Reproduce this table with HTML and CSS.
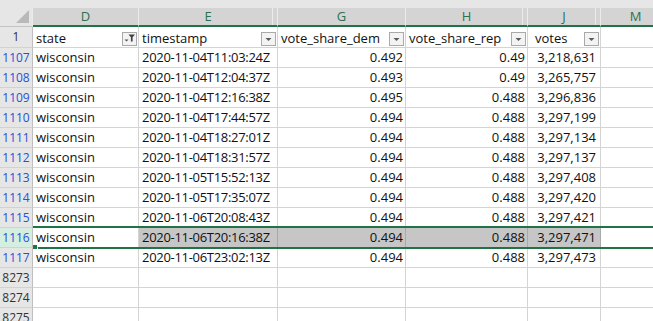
FILE: index.html
```html
<!DOCTYPE html>
<html>
<head>
<meta charset="utf-8">
<link rel="stylesheet" href="styles.css">
</head>
<body>
<div class="sheet">
  <div class="topbar"></div>
  <div class="row colhead">
    <div class="corner"><svg width="14" height="14" viewBox="0 0 14 14"><polygon points="13,0 13,13 0,13" fill="#b9b9b9"/></svg></div>
    <div class="ch">D</div>
    <div class="ch hid">E</div>
    <div class="ch">G</div>
    <div class="ch hid">H</div>
    <div class="ch hid">J</div>
    <div class="ch">M</div>
  </div>
  <div class="row first">
    <div class="rh">1</div>
    <div class="c hd"><span>state</span><span class="fbtn"><svg width="13" height="12" viewBox="0 0 13 12"><polygon points="1.5,6.5 5.5,6.5 3.5,8.5" fill="#505050"/><path d="M5.5 1.5 H12 L9.6 4.2 V8.5 H7.9 V4.2 Z" fill="#404040"/></svg></span></div>
    <div class="c hd"><span>timestamp</span><span class="fbtn"><svg width="13" height="12" viewBox="0 0 13 12"><polygon points="3.5,5 9.5,5 6.5,8" fill="#5a5a5a"/></svg></span></div>
    <div class="c hd"><span>vote_share_dem</span><span class="fbtn"><svg width="13" height="12" viewBox="0 0 13 12"><polygon points="3.5,5 9.5,5 6.5,8" fill="#5a5a5a"/></svg></span></div>
    <div class="c hd"><span>vote_share_rep</span><span class="fbtn"><svg width="13" height="12" viewBox="0 0 13 12"><polygon points="3.5,5 9.5,5 6.5,8" fill="#5a5a5a"/></svg></span></div>
    <div class="c hd votes"><span>votes</span><span class="fbtn"><svg width="13" height="12" viewBox="0 0 13 12"><polygon points="3.5,5 9.5,5 6.5,8" fill="#5a5a5a"/></svg></span></div>
    <div class="c"></div>
  </div>

  <div class="row"><div class="rh f">1107</div><div class="c">wisconsin</div><div class="c ts">2020-11-04T11:03:24Z</div><div class="c n">0.492</div><div class="c n">0.49</div><div class="c v">3,218,631</div><div class="c"></div></div>
  <div class="row"><div class="rh f">1108</div><div class="c">wisconsin</div><div class="c ts">2020-11-04T12:04:37Z</div><div class="c n">0.493</div><div class="c n">0.49</div><div class="c v">3,265,757</div><div class="c"></div></div>
  <div class="row"><div class="rh f">1109</div><div class="c">wisconsin</div><div class="c ts">2020-11-04T12:16:38Z</div><div class="c n">0.495</div><div class="c n">0.488</div><div class="c v">3,296,836</div><div class="c"></div></div>
  <div class="row"><div class="rh f">1110</div><div class="c">wisconsin</div><div class="c ts">2020-11-04T17:44:57Z</div><div class="c n">0.494</div><div class="c n">0.488</div><div class="c v">3,297,199</div><div class="c"></div></div>
  <div class="row"><div class="rh f">1111</div><div class="c">wisconsin</div><div class="c ts">2020-11-04T18:27:01Z</div><div class="c n">0.494</div><div class="c n">0.488</div><div class="c v">3,297,134</div><div class="c"></div></div>
  <div class="row"><div class="rh f">1112</div><div class="c">wisconsin</div><div class="c ts">2020-11-04T18:31:57Z</div><div class="c n">0.494</div><div class="c n">0.488</div><div class="c v">3,297,137</div><div class="c"></div></div>
  <div class="row"><div class="rh f">1113</div><div class="c">wisconsin</div><div class="c ts">2020-11-05T15:52:13Z</div><div class="c n">0.494</div><div class="c n">0.488</div><div class="c v">3,297,408</div><div class="c"></div></div>
  <div class="row"><div class="rh f">1114</div><div class="c">wisconsin</div><div class="c ts">2020-11-05T17:35:07Z</div><div class="c n">0.494</div><div class="c n">0.488</div><div class="c v">3,297,420</div><div class="c"></div></div>
  <div class="row"><div class="rh f">1115</div><div class="c">wisconsin</div><div class="c ts">2020-11-06T20:08:43Z</div><div class="c n">0.494</div><div class="c n">0.488</div><div class="c v">3,297,421</div><div class="c"></div></div>
  <div class="row sel"><div class="rh f selrh">1116</div><div class="c">wisconsin</div><div class="c ts g">2020-11-06T20:16:38Z</div><div class="c n g">0.494</div><div class="c n g">0.488</div><div class="c v g">3,297,471</div><div class="c"></div><span class="handle"></span></div>
  <div class="row"><div class="rh f">1117</div><div class="c">wisconsin</div><div class="c ts">2020-11-06T23:02:13Z</div><div class="c n">0.494</div><div class="c n">0.488</div><div class="c v">3,297,473</div><div class="c"></div></div>
  <div class="row"><div class="rh">8273</div><div class="c"></div><div class="c"></div><div class="c"></div><div class="c"></div><div class="c"></div><div class="c"></div></div>
  <div class="row"><div class="rh">8274</div><div class="c"></div><div class="c"></div><div class="c"></div><div class="c"></div><div class="c"></div><div class="c"></div></div>
  <div class="row"><div class="rh">8275</div><div class="c"></div><div class="c"></div><div class="c"></div><div class="c"></div><div class="c"></div><div class="c"></div></div>
</div>
</body>
</html>
```

FILE: styles.css
```css
* { box-sizing: border-box; }
html, body { margin: 0; padding: 0; background: #ffffff; overflow: hidden; }
body { width: 653px; height: 321px; }

.sheet {
  width: 671px;
  font-family: "Open Sans", "Liberation Sans", sans-serif;
  font-size: 13px;
  color: #111;
}

.topbar { height: 8px; background: #e6e6e6; }

.row {
  display: grid;
  grid-template-columns: 33px 106px 139px 128px 122px 73px 70px;
  height: 20px;
  line-height: 19px;
}

.colhead { height: 19px; line-height: 17px; }
.corner {
  background: #e6e6e6;
  border-right: 1px solid #ececec;
  border-bottom: 1px solid #c4c4c4;
  display: flex;
  justify-content: flex-end;
  align-items: flex-end;
  padding: 0 2px 2px 0;
}
.corner svg { display: block; }
.ch {
  background: #d4d4d4;
  border-right: 1px solid #ececec;
  border-bottom: 2px solid #217346;
  text-align: center;
  color: #2a7150;
}
.ch.hid { box-shadow: inset -4px 0 0 #d4d4d4, inset -5px 0 0 #ececec; }

.first { height: 21px; line-height: 20px; }

.rh {
  background: #e6e6e6;
  border-right: 1px solid #bfbfbf;
  border-bottom: 1px solid #d2d2d2;
  text-align: center;
  color: #333;
  font-size: 12px;
}
.rh.f { color: #2b4fd8; }
.rh.selrh { background: #d4efdf; }

.c {
  border-right: 1px solid #d4d4d4;
  border-bottom: 1px solid #d4d4d4;
  padding: 0 3px;
  white-space: nowrap;
  overflow: hidden;
}
.c.ts { letter-spacing: -0.3px; }
.c.n { text-align: right; padding-right: 2px; }
.c.v { text-align: right; padding-right: 4px; }
.c.g { background: #c6c6c6; border-right-color: #a9a9a9; }

.c.hd {
  display: flex;
  justify-content: space-between;
  align-items: flex-start;
  padding-right: 1px;
}
.c.hd > span:first-child { padding-top: 1px; }
.c.votes { padding-left: 7px; }
.fbtn {
  width: 15px;
  height: 14px;
  margin-top: 5px;
  border: 1px solid #a9a9a9;
  background: #f3f3f3;
  display: block;
}
.fbtn svg { display: block; }

.sel { position: relative; }
.sel::before {
  content: "";
  position: absolute;
  left: 33px; right: 0; top: -2px;
  height: 2px;
  background: #217346;
}
.sel::after {
  content: "";
  position: absolute;
  left: 38px; right: 0; top: 19px;
  height: 2px;
  background: #217346;
}
.handle {
  position: absolute;
  left: 33px; top: 17px;
  width: 4px; height: 4px;
  background: #217346;
}
```
